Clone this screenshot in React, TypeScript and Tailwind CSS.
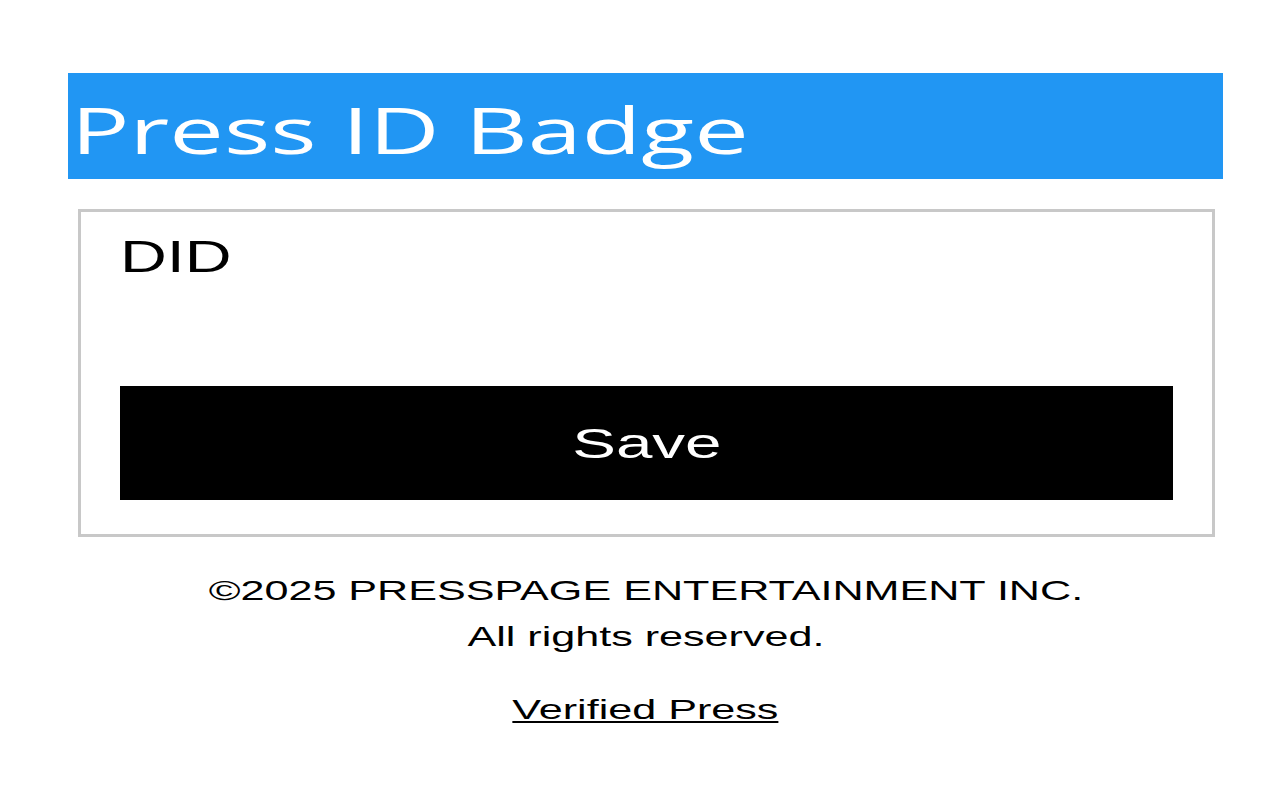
export default function App() {
  return (
    <div className="min-h-[800px] overflow-hidden bg-white pt-[73px]" style={{ fontFamily: '"Liberation Sans", Arial, sans-serif' }}>
      <div className="ml-[68px] w-[1155px]">
        <header className="h-[106px] bg-[#2196f3] pl-[3px] pt-[25px]">
          <h1
            className="inline-block origin-left scale-x-[1.52] text-[64px] leading-none text-white"
            style={{ fontFamily: '"Open Sans", "Noto Sans", sans-serif' }}
          >
            Press ID Badge
          </h1>
        </header>

        <section className="ml-[10px] mt-[30px] w-[1137px] border-[3px] border-[#c8c8c8] px-[39px] pb-[34px] pt-[15px]">
          <label className="inline-block origin-left scale-x-[1.44] text-[45px] leading-[60px] text-black">DID</label>
          <div className="h-[99px]" />
          <button type="button" className="h-[114px] w-full bg-black text-white">
            <span className="inline-block scale-x-[1.56] text-[42px]">Save</span>
          </button>
        </section>

        <footer className="mt-[31px] flex flex-col items-center text-[28px] text-black">
          <p className="scale-x-[1.54] leading-[46px]">©2025 PRESSPAGE ENTERTAINMENT INC.</p>
          <p className="scale-x-[1.54] leading-[46px]">All rights reserved.</p>
          <a href="#" className="mt-[27px] scale-x-[1.54] leading-[46px] underline">
            Verified Press
          </a>
        </footer>
      </div>
    </div>
  );
}
